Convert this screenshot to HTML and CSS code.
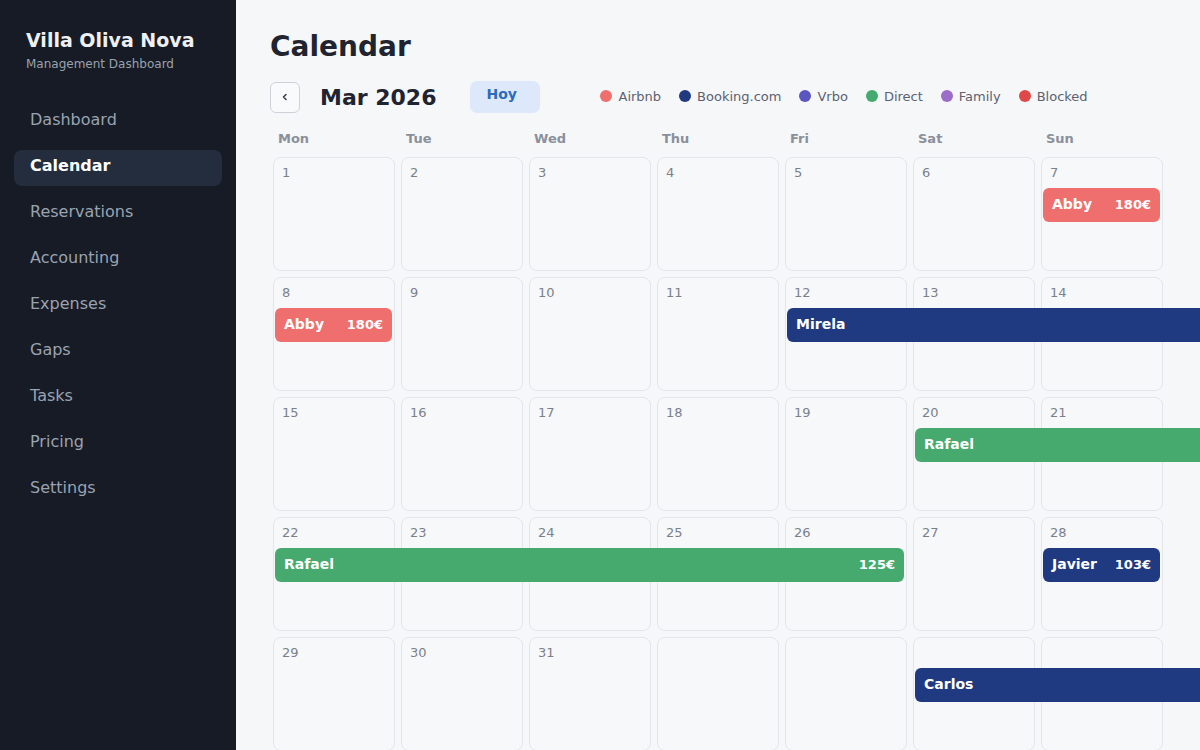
FILE: index.html
```html
<!DOCTYPE html>
<html lang="en">
<head>
<meta charset="utf-8">
<title>Villa Oliva Nova — Calendar</title>
<link rel="stylesheet" href="styles.css">
</head>
<body>
<div class="app">
  <aside class="sidebar">
    <div class="brand">
      <div class="brand-name">Villa Oliva Nova</div>
      <div class="brand-sub">Management Dashboard</div>
    </div>
    <nav class="nav">
      <a class="nav-item">Dashboard</a>
      <a class="nav-item active">Calendar</a>
      <a class="nav-item">Reservations</a>
      <a class="nav-item">Accounting</a>
      <a class="nav-item">Expenses</a>
      <a class="nav-item">Gaps</a>
      <a class="nav-item">Tasks</a>
      <a class="nav-item">Pricing</a>
      <a class="nav-item">Settings</a>
    </nav>
  </aside>
  <main class="main">
    <h1 class="title">Calendar</h1>
    <div class="toolbar">
      <button class="prev" aria-label="Previous month">
        <svg width="10" height="10" viewBox="0 0 10 10"><path d="M6 2.5 L3.5 5 L6 7.5" fill="none" stroke="#3a4150" stroke-width="1.6" stroke-linecap="round" stroke-linejoin="round"/></svg>
      </button>
      <div class="month">Mar 2026</div>
      <button class="today">Hoy</button>
      <ul class="legend">
        <li><span class="dot airbnb"></span>Airbnb</li>
        <li><span class="dot booking"></span>Booking.com</li>
        <li><span class="dot vrbo"></span>Vrbo</li>
        <li><span class="dot direct"></span>Direct</li>
        <li><span class="dot family"></span>Family</li>
        <li><span class="dot blocked"></span>Blocked</li>
      </ul>
    </div>
    <div class="calendar">
      <div class="weekdays">
        <div>Mon</div><div>Tue</div><div>Wed</div><div>Thu</div><div>Fri</div><div>Sat</div><div>Sun</div>
      </div>
      <div class="week">
        <div class="day"><span class="num">1</span></div>
        <div class="day"><span class="num">2</span></div>
        <div class="day"><span class="num">3</span></div>
        <div class="day"><span class="num">4</span></div>
        <div class="day"><span class="num">5</span></div>
        <div class="day"><span class="num">6</span></div>
        <div class="day"><span class="num">7</span></div>
        <div class="bar airbnb" style="left:770px;width:117px"><span class="guest">Abby</span><span class="price">180€</span></div>
      </div>
      <div class="week">
        <div class="day"><span class="num">8</span></div>
        <div class="day"><span class="num">9</span></div>
        <div class="day"><span class="num">10</span></div>
        <div class="day"><span class="num">11</span></div>
        <div class="day"><span class="num">12</span></div>
        <div class="day"><span class="num">13</span></div>
        <div class="day"><span class="num">14</span></div>
        <div class="bar airbnb" style="left:2px;width:117px"><span class="guest">Abby</span><span class="price">180€</span></div>
        <div class="bar booking" style="left:514px;width:700px"><span class="guest">Mirela</span></div>
      </div>
      <div class="week">
        <div class="day"><span class="num">15</span></div>
        <div class="day"><span class="num">16</span></div>
        <div class="day"><span class="num">17</span></div>
        <div class="day"><span class="num">18</span></div>
        <div class="day"><span class="num">19</span></div>
        <div class="day"><span class="num">20</span></div>
        <div class="day"><span class="num">21</span></div>
        <div class="bar direct" style="left:642px;width:700px"><span class="guest">Rafael</span></div>
      </div>
      <div class="week">
        <div class="day"><span class="num">22</span></div>
        <div class="day"><span class="num">23</span></div>
        <div class="day"><span class="num">24</span></div>
        <div class="day"><span class="num">25</span></div>
        <div class="day"><span class="num">26</span></div>
        <div class="day"><span class="num">27</span></div>
        <div class="day"><span class="num">28</span></div>
        <div class="bar direct" style="left:2px;width:629px"><span class="guest">Rafael</span><span class="price">125€</span></div>
        <div class="bar booking" style="left:770px;width:117px"><span class="guest">Javier</span><span class="price">103€</span></div>
      </div>
      <div class="week">
        <div class="day"><span class="num">29</span></div>
        <div class="day"><span class="num">30</span></div>
        <div class="day"><span class="num">31</span></div>
        <div class="day"></div>
        <div class="day"></div>
        <div class="day"></div>
        <div class="day"></div>
        <div class="bar booking" style="left:642px;width:700px"><span class="guest">Carlos</span></div>
      </div>
    </div>
  </main>
</div>
</body>
</html>
```

FILE: styles.css
```css
* { box-sizing: border-box; }
html, body {
  margin: 0;
  padding: 0;
  height: 100%;
  overflow: hidden;
}
body {
  font-family: "DejaVu Sans", Verdana, sans-serif;
  background: #f6f7f9;
  color: #1f2430;
}
.app {
  display: flex;
  height: 100vh;
  overflow: hidden;
}
.sidebar {
  width: 236px;
  flex: 0 0 236px;
  background: #161b25;
  padding: 29px 14px 0 14px;
}
.brand {
  padding-left: 12px;
}
.brand-name {
  font-size: 19px;
  font-weight: bold;
  color: #eef0f4;
  line-height: 23px;
}
.brand-sub {
  font-size: 12px;
  color: #9aa2ae;
  line-height: 16px;
  margin-top: 4px;
}
.nav {
  display: flex;
  flex-direction: column;
  gap: 10px;
  margin-top: 32px;
}
.nav-item {
  display: block;
  height: 36px;
  line-height: 31px;
  padding-left: 16px;
  font-size: 16px;
  color: #9aa3b1;
  border-radius: 8px;
}
.nav-item.active {
  background: #242d3d;
  color: #ffffff;
  font-weight: bold;
}
.main {
  flex: 1;
  padding: 30px 0 0 34px;
  overflow: hidden;
  min-width: 0;
}
.title {
  margin: 0;
  font-size: 28px;
  line-height: 33px;
  font-weight: bold;
  color: #1f2430;
}
.toolbar {
  display: flex;
  align-items: center;
  margin-top: 18px;
  height: 32px;
}
.prev {
  width: 30px;
  height: 31px;
  border: 1.5px solid #cdd2d9;
  border-radius: 6px;
  background: #f9fafb;
  display: flex;
  align-items: center;
  justify-content: center;
  padding: 0;
}
.month {
  margin-left: 20px;
  font-size: 22px;
  font-weight: bold;
  color: #1f2430;
}
.today {
  margin-left: 34px;
  width: 70px;
  height: 32px;
  border: none;
  border-radius: 7px;
  background: #dde9fa;
  color: #2d6bbd;
  font-family: inherit;
  font-size: 14px;
  font-weight: bold;
  text-align: left;
  padding: 0 0 7px 16px;
}
.legend {
  list-style: none;
  display: flex;
  gap: 18px;
  margin: 0 0 2px 60px;
  padding: 0;
}
.legend li {
  display: flex;
  align-items: center;
  gap: 6px;
  font-size: 13px;
  color: #5b6271;
}
.dot {
  width: 12px;
  height: 12px;
  border-radius: 50%;
}
.dot.airbnb, .bar.airbnb { background: #ef6e6e; }
.dot.booking, .bar.booking { background: #1f3a80; }
.dot.vrbo { background: #5a55bf; }
.dot.direct, .bar.direct { background: #46aa6e; }
.dot.family { background: #9a6ec8; }
.dot.blocked { background: #e04848; }
.calendar {
  margin-top: 18px;
  margin-left: 3px;
}
.weekdays {
  display: grid;
  grid-template-columns: repeat(7, 122px);
  column-gap: 6px;
  height: 19px;
  margin-bottom: 7px;
}
.weekdays div {
  padding-left: 5px;
  font-size: 13px;
  font-weight: bold;
  color: #8a909b;
  line-height: 16px;
}
.week {
  position: relative;
  display: grid;
  grid-template-columns: repeat(7, 122px);
  column-gap: 6px;
  height: 114px;
  margin-bottom: 6px;
}
.day {
  border: 1px solid #e3e6ea;
  border-radius: 8px;
  background: #f7f8fa;
  padding: 4px 0 0 8px;
}
.num {
  font-size: 13px;
  color: #7b808a;
  line-height: 16px;
}
.bar {
  position: absolute;
  top: 31px;
  height: 34px;
  border-radius: 6px;
  color: #ffffff;
  display: flex;
  align-items: center;
  justify-content: space-between;
  padding: 0 9px 2px 9px;
  white-space: nowrap;
}
.guest {
  font-size: 14px;
  font-weight: bold;
}
.price {
  font-size: 13px;
  font-weight: bold;
}
```
